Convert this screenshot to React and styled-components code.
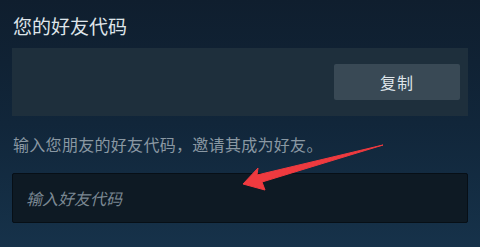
import React from "react";
import styled, { createGlobalStyle } from "styled-components";

const Global = createGlobalStyle`
  html, body { margin: 0; padding: 0; }
  body {
    width: 480px;
    height: 247px;
    overflow: hidden;
    background: linear-gradient(180deg, #0f1e2e 0%, #11263a 50%, #16324a 100%);
    font-family: "Noto Sans CJK SC", "Noto Sans", sans-serif;
  }
`;

const Page = styled.div`
  position: relative;
  width: 480px;
  height: 247px;
  box-sizing: border-box;
  padding: 14px 12px 0 12px;
  display: flex;
  flex-direction: column;
`;

const Title = styled.div`
  font-size: 19px;
  line-height: 24px;
  color: #dfe5ea;
  padding-left: 1px;
`;

const CodePanel = styled.div`
  margin-top: 10px;
  height: 68px;
  box-sizing: border-box;
  background: #1e2f3c;
  display: flex;
  align-items: center;
  justify-content: flex-end;
  padding-right: 8px;
  width: 456px;
`;

const CopyButton = styled.button`
  width: 126px;
  height: 36px;
  border: none;
  border-radius: 2px;
  background: #394955;
  color: #dfe5ea;
  font-family: "Noto Sans CJK SC", "Noto Sans", sans-serif;
  font-size: 16px;
  padding: 0;
  letter-spacing: 1px;
`;

const Hint = styled.div`
  margin-top: 17px;
  font-size: 16px;
  letter-spacing: 0.3px;
  line-height: 22px;
  color: #8a98a3;
  padding-left: 1px;
`;

const CodeInput = styled.input`
  margin-top: 18px;
  width: 456px;
  height: 50px;
  box-sizing: border-box;
  background: #0e1a24;
  border: 1px solid #070f16;
  border-radius: 2px;
  padding: 0 0 0 13px;
  font-family: "Noto Sans CJK SC", "Noto Sans", sans-serif;
  font-size: 16px;
  color: #dfe5ea;
  outline: none;
  &::placeholder {
    color: #7b8893;
    font-style: italic;
  }
`;

const Arrow = styled.svg`
  position: absolute;
  left: 0;
  top: 0;
  width: 480px;
  height: 247px;
  pointer-events: none;
`;

export default function App() {
  return (
    <>
      <Global />
      <Page>
        <Title>您的好友代码</Title>
        <CodePanel>
          <CopyButton>复制</CopyButton>
        </CodePanel>
        <Hint>输入您朋友的好友代码，邀请其成为好友。</Hint>
        <CodeInput placeholder="输入好友代码" />
        <Arrow viewBox="0 0 480 247">
          <path
            d="M243 184 L258 168 L257 175 L383 145 L262 182 L265 190 Z"
            fill="#ef3a3f"
            stroke="#ef3a3f"
            strokeWidth="1"
            strokeLinejoin="round"
          />
        </Arrow>
      </Page>
    </>
  );
}
